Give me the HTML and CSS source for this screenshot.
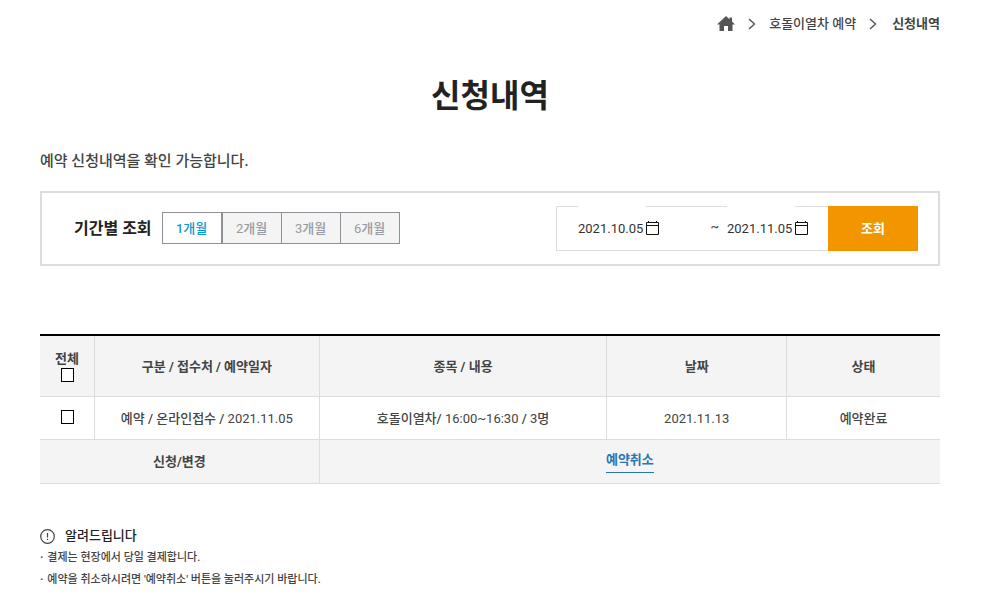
FILE: index.html
```html
<!DOCTYPE html>
<html lang="ko">
<head>
<meta charset="utf-8">
<title>신청내역</title>
<link rel="stylesheet" href="styles.css">
</head>
<body>
<nav class="breadcrumb" aria-label="현재 위치">
  <a href="#" aria-label="홈"><svg class="home" viewBox="0 0 18 16"><path d="M9 0 0 8.500h2.500V15H7v-5h4v5h4.500V8.500H18l-3-3V1.500h-2.500v1.800z"/></svg></a>
  <svg class="chevron" viewBox="0 0 8 12"><path d="m1 1 5.500 5L1 11"/></svg>
  <a href="#">호돌이열차 예약</a>
  <svg class="chevron" viewBox="0 0 8 12"><path d="m1 1 5.500 5L1 11"/></svg>
  <strong>신청내역</strong>
</nav>
<main>
  <h1>신청내역</h1>
  <p class="intro">예약 신청내역을 확인 가능합니다.</p>

  <form class="search">
    <h2>기간별 조회</h2>
    <div class="periods">
      <button type="button" class="period active">1개월</button>
      <button type="button" class="period"><span class="num">2</span>개월</button>
      <button type="button" class="period"><span class="num">3</span>개월</button>
      <button type="button" class="period"><span class="num">6</span>개월</button>
    </div>
    <div class="range">
      <input type="text" value="2021.10.05" aria-label="시작일">
      <svg class="calendar" viewBox="0 0 13 14"><path d="M.500 1.500h12v12H.500zM.500 4.500h12M2.500 0v2M10.500 0v2"/></svg>
      <span class="tilde">~</span>
      <input type="text" value="2021.11.05" aria-label="종료일">
      <svg class="calendar" viewBox="0 0 13 14"><path d="M.500 1.500h12v12H.500zM.500 4.500h12M2.500 0v2M10.500 0v2"/></svg>
    </div>
    <button type="submit" class="submit">조회</button>
  </form>

  <table>
    <colgroup><col class="c-check"><col class="c-kind"><col class="c-item"><col class="c-date"><col class="c-state"></colgroup>
    <thead>
      <tr>
        <th scope="col"><label class="all">전체<input type="checkbox"></label></th>
        <th scope="col">구분 / 접수처 / 예약일자</th>
        <th scope="col">종목 / 내용</th>
        <th scope="col">날짜</th>
        <th scope="col">상태</th>
      </tr>
    </thead>
    <tbody>
      <tr>
        <td><input type="checkbox" aria-label="예약 선택"></td>
        <td>예약 / 온라인접수 / <span class="num">2021.11.05</span></td>
        <td>호돌이열차/ <span class="num">16:00~16:30</span> / <span class="num">3</span>명</td>
        <td><span class="num">2021.11.13</span></td>
        <td>예약완료</td>
      </tr>
      <tr class="change">
        <th scope="row" colspan="2">신청/변경</th>
        <td colspan="3"><a href="#">예약취소</a></td>
      </tr>
    </tbody>
  </table>

  <section class="notice">
    <h3><svg class="info" viewBox="0 0 15 15"><circle cx="7.500" cy="7.500" r="6.800"/><path d="M7.500 4v4.500M7.500 9.800V11"/></svg>알려드립니다</h3>
    <ul>
      <li>결제는 현장에서 당일 결제합니다.</li>
      <li>예약을 취소하시려면 '예약취소' 버튼을 눌러주시기 바랍니다.</li>
    </ul>
  </section>
</main>
</body>
</html>
```
FILE: styles.css
```css
* { box-sizing: border-box; }
body {
  margin: 0;
  padding: 12px 41px 8px 40px;
  background: #fff;
  color: #444;
  font: 500 13px/22px Roboto, "Noto Sans CJK KR", sans-serif;
}
h1, h2, h3, p, ul { margin: 0; padding: 0; }
a { color: inherit; text-decoration: none; }
button, input { font: inherit; color: inherit; margin: 0; border-radius: 0; }
svg { display: block; flex: none; }
.num { font-weight: 400; }

.breadcrumb { display: flex; align-items: center; justify-content: flex-end; gap: 13px; height: 24px; }
.breadcrumb strong { font-weight: 700; margin-left: 2px; }
.home { width: 18px; height: 16px; fill: #555; }
.chevron { width: 8px; height: 12px; fill: none; stroke: #555; stroke-width: 1.4; }

h1 { margin-top: 37px; text-align: center; font-size: 32px; line-height: 46px; color: #222; }
.intro { margin-top: 31px; font-size: 15px; line-height: 22px; }

.search { display: flex; align-items: center; margin-top: 19px; padding: 13px 20px 13px 32px; border: 2px solid #ddd; }
.search h2 { font-size: 16px; line-height: 24px; color: #222; }
.periods { display: flex; margin: 0 0 2px 10px; }
.period { width: 60px; height: 32px; padding: 2px 0 0; margin-left: -1px; border: 1px solid #8f9199; background: #f4f4f4; color: #999ba3; }
.period.active { width: 61px; margin: 0; border-right-width: 2px; background: #fff; color: #0c97d5; }
.range { display: flex; align-items: center; width: 272px; height: 45px; margin-left: auto; padding-left: 21px; border: 1px solid #ddd; border-right: 0; }
.range input { width: 68px; height: 43px; margin-top: -2px; padding: 2px 0 0; border: 0; background: #fff; color: #333; font-weight: 400; }
.calendar { width: 13px; height: 14px; margin-bottom: 2px; fill: none; stroke: #111; }
.tilde { width: 68px; padding: 0 8px 4px 0; text-align: right; line-height: 20px; }
.submit { width: 90px; height: 45px; padding: 0; border: 0; background: #f29600; color: #fff; font-weight: 700; }

table { width: 100%; margin-top: 68px; border-collapse: separate; border-spacing: 0; table-layout: fixed; border-top: 2px solid #000; }
.c-check { width: 55px; }
.c-kind { width: 25%; }
.c-item { width: 32%; }
.c-date { width: 20%; }
.c-state { width: 17%; }
th, td { padding: 2px 0 0; text-align: center; border-right: 1px solid #ddd; border-bottom: 1px solid #ddd; }
th:last-child, td:last-child { border-right: 0; }
thead th { height: 61px; font-weight: 700; background: #f4f4f4; }
thead th:first-child, td:first-child, .change th, .change td { padding: 0; }
td { height: 43px; }
td:first-child input { margin-bottom: 2px; }
.change th, .change td { height: 44px; background: #f4f4f4; }
.change td { padding-bottom: 2px; }
.change a { display: inline-block; color: #2a75b3; border-bottom: 1px solid #2a75b3; line-height: 24px; font-weight: 700; }
.all { display: flex; flex-direction: column; align-items: center; line-height: 18px; }
input[type="checkbox"] { display: block; margin: 0 auto; appearance: none; width: 13px; height: 14px; border: 1px solid #000; background: #fff; }

.notice { margin-top: 41px; }
.notice h3 { display: flex; align-items: center; gap: 10px; font-size: 13px; font-weight: 500; line-height: 22px; color: #222; }
.info { width: 15px; height: 15px; fill: none; stroke: #444; stroke-width: 1.2; }
.notice ul { list-style: none; }
.notice li { display: flex; gap: 4px; font-size: 11px; line-height: 22px; }
.notice li::before { content: "·"; font-weight: 700; }
```
